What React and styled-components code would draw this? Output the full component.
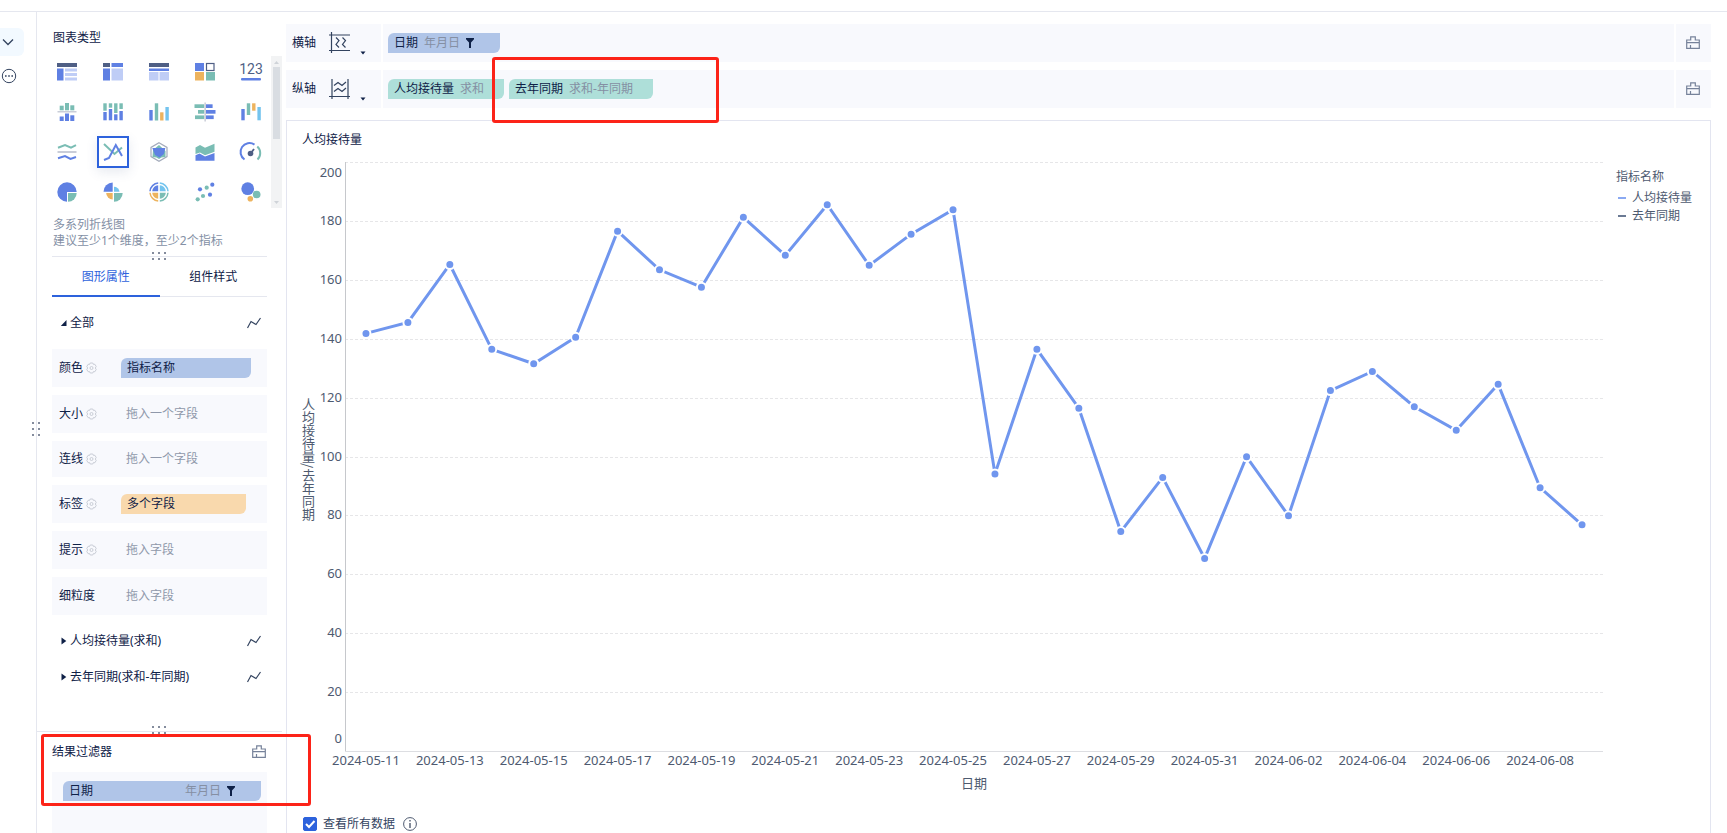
import React, { useLayoutEffect, useRef, useState } from 'react'
import styled, { createGlobalStyle, css } from 'styled-components'

const GlobalStyle = createGlobalStyle`
  * {
    box-sizing: border-box;
  }
  body {
    margin: 0;
    background: #fff;
    color: #0f2147;
    font-family: "Noto Sans", "Noto Sans CJK SC", sans-serif;
    font-size: 12px;
    line-height: 16px;
  }
  button {
    display: flex;
    align-items: center;
    margin: 0;
    padding: 0;
    border: none;
    background: transparent;
    color: inherit;
    font: inherit;
    cursor: pointer;
  }
  svg {
    display: block;
    flex-shrink: 0;
  }
`

const BLUE = '#5f80e3'
const LIGHT = '#bfcdf6'
const DARK = '#4f5f85'
const GREEN = '#7abdb4'
const ORANGE = '#edb35e'
const CYAN = '#74c4ee'
const GREY = '#c9cdd8'

/* ---------- page ---------- */

const Page = styled.div`
  display: flex;
  flex-direction: column;
  min-height: 100vh;
`

const TopBar = styled.header`
  height: 12px;
  border-bottom: 1px solid #e5e7ef;
`

const Body = styled.div`
  display: flex;
  flex: 1;
`

const Rail = styled.nav`
  display: flex;
  flex-direction: column;
  width: 36px;
  padding-top: 16px;
  gap: 6px;
`

const RailButton = styled.button`
  width: 24px;
  height: 28px;
  border-radius: 0 6px 6px 0;
  background: ${p => (p.$active ? '#f2f9ff' : 'transparent')};
  color: #33435f;
`

const Panel = styled.aside`
  position: relative;
  display: flex;
  flex-direction: column;
  width: 250px;
  border-left: 1px solid #e5e7ef;
`

const SideHandle = styled.div`
  position: absolute;
  left: -6px;
  top: 409px;
`

/* ---------- chart type picker ---------- */

const PanelTitle = styled.h2`
  margin: 0;
  padding: 18px 15px 10px 16px;
  font-size: 12px;
  font-weight: 400;
`

const Picker = styled.div`
  display: flex;
  gap: 4px;
  padding-left: 14px;
`

const TypeGrid = styled.div`
  display: grid;
  grid-template-columns: repeat(5, 32px);
  gap: 8px 14px;
`

const TypeButton = styled.button`
  justify-content: center;
  width: 32px;
  height: 32px;
  ${p => p.$selected && css`
    border: 2px solid #2d62dc;
    box-shadow: 0 4px 12px rgba(60, 80, 130, 0.12);
  `}
`

const ScrollTrack = styled.div`
  display: flex;
  flex-direction: column;
  align-items: center;
  width: 11px;
  background: #f2f3f4;
`

const ScrollThumb = styled.div`
  width: 7px;
  height: 72px;
  margin-bottom: auto;
  background: #d9dde2;
`

const Hint = styled.p`
  margin: 0;
  padding: 9px 0 7px 16px;
  color: #8490a5;
`

const Divider = styled.div`
  position: relative;
  height: 1px;
  margin: ${p => (p.$wide ? '0 4px 0 0' : '0 19px 0 15px')};
  background: #e5e7ef;
`

const DividerHandle = styled.div`
  position: absolute;
  left: ${p => (p.$wide ? '114px' : '99px')};
  top: ${p => (p.$wide ? '-6px' : '-5px')};
`

const Tabs = styled.div`
  display: flex;
  height: 40px;
  margin: 0 19px 0 15px;
  box-shadow: inset 0 -1px #e5e7ef;
`

const Tab = styled.button`
  flex: 1;
  justify-content: center;
  padding-top: 2px;
  border-bottom: 2px solid ${p => (p.$active ? '#2d62dc' : 'transparent')};
  color: ${p => (p.$active ? '#2d62dc' : '#0f2147')};
`

/* ---------- attributes ---------- */

const Attributes = styled.div`
  display: flex;
  flex-direction: column;
  padding: 8px 19px 36px 15px;
`

const GroupButton = styled.button`
  gap: 3px;
  height: 36px;
  padding: 0 6px 0 8px;

  svg:last-child {
    margin-left: auto;
  }
`

const AttrList = styled.div`
  display: flex;
  flex-direction: column;
  gap: 8px;
  padding: 8px 0;
`

const AttrRow = styled.div`
  display: flex;
  align-items: center;
  height: ${p => (p.$short ? '36px' : '38px')};
  padding-left: 7px;
  background: #f8f9fd;
`

const AttrLabel = styled.div`
  display: flex;
  align-items: center;
  gap: 3px;
  width: 62px;
`

const Placeholder = styled.span`
  padding-left: 5px;
  color: #8f98aa;
`

const pillColors = {
  blue: '#b0c5e8',
  teal: '#aedfd9',
  orange: '#f9d9ad',
}

const Pill = styled.div`
  display: flex;
  align-items: center;
  gap: 6px;
  width: ${p => p.$width || 'auto'};
  height: 20px;
  padding: 0 20px 0 6px;
  border-radius: 6px 0 6px 0;
  background: ${p => pillColors[p.$color]};
`

const PillNote = styled.span`
  color: #858fa3;
  ${p => p.$right && 'margin-left: auto;'}
`

/* ---------- result filter ---------- */

const FilterSection = styled.section`
  position: relative;
  display: flex;
  flex: 1;
  flex-direction: column;
  padding: 0 19px 0 15px;
`

const FilterHead = styled.div`
  display: flex;
  align-items: center;
  justify-content: space-between;
  height: 40px;
  padding-right: 1px;
`

const FilterBox = styled.div`
  flex: 1;
  min-height: 60px;
  padding: 9px 6px 9px 11px;
  background: #f8f9fd;
`

const FilterMark = styled.div`
  position: absolute;
  left: 4px;
  top: 2px;
  width: 270px;
  height: 72px;
  border: 3px solid #fc2318;
  border-radius: 3px;
  z-index: 2;
  pointer-events: none;
`

/* ---------- right side ---------- */

const Main = styled.main`
  display: flex;
  flex: 1;
  flex-direction: column;
  gap: 12px;
  min-width: 0;
  padding: 12px 16px 0 0;
`

const AxisList = styled.div`
  position: relative;
  display: flex;
  flex-direction: column;
  gap: 8px;
`

const AxisRow = styled.div`
  display: grid;
  grid-template-columns: 95px 1fr 35px;
  gap: 2px;
  height: 38px;
`

const AxisCell = styled.div`
  display: flex;
  align-items: center;
  gap: 5px;
  padding-left: ${p => (p.$head ? '6px' : '5px')};
  background: #f8f9fd;
`

const AxisButton = styled.button`
  gap: 9px;
  margin-left: 8px;
`

const ClearButton = styled.button`
  justify-content: center;
  padding-right: 2px;
  background: #f8f9fd;
`

const AxisMark = styled.div`
  position: absolute;
  left: 206px;
  top: 33px;
  width: 227px;
  height: 66px;
  border: 3px solid #fc2318;
  border-radius: 3px;
  pointer-events: none;
`

const Card = styled.section`
  display: flex;
  flex: 1;
  flex-direction: column;
  border: 1px solid #e3e5f0;
  border-bottom: none;
  padding-left: 15px;
`

const CardTitle = styled.h3`
  margin: 0;
  padding: 11px 0 6px;
  font-size: 12px;
  font-weight: 400;
`

const ChartArea = styled.div`
  display: flex;
`

const YTitle = styled.div`
  align-self: center;
  width: 13px;
  margin: 0 2px 30px 0;
  color: #4e5a70;
  font-family: "Noto Sans CJK SC", sans-serif;
  font-size: 13px;
  line-height: 13px;
  writing-mode: vertical-rl;
`

const Plot = styled.div`
  flex: 1;
  min-width: 0;
  height: 640px;

  text {
    fill: #4e5a70;
    font-size: 13px;
  }
`

const Legend = styled.div`
  width: 107px;
  padding: 15px 0 0 13px;
  color: #4e5a70;
`

const LegendList = styled.ul`
  margin: 4px 0 0;
  padding: 0;
  list-style: none;
`

const LegendItem = styled.li`
  display: flex;
  align-items: center;
  gap: 6px;
  height: 18px;
  padding-left: 2px;

  &::before {
    content: '';
    width: 8px;
    height: 2px;
    background: ${p => p.$color};
  }
`

const Footer = styled.div`
  display: flex;
  align-items: center;
  gap: 8px;
  height: 16px;
  margin: 22px 0 0 1px;
  color: #33435f;
`

const CheckLabel = styled.label`
  display: flex;
  align-items: center;
  gap: 6px;
`

const CheckWrap = styled.span`
  display: grid;

  > * {
    grid-area: 1 / 1;
  }
  svg {
    pointer-events: none;
  }
`

const Check = styled.input`
  appearance: none;
  width: 14px;
  height: 14px;
  margin: 0;
  border: 1px solid #2d62dc;
  border-radius: 2px;
  background: #fff;

  &:checked {
    background: #2d62dc;
  }
`

/* ---------- icons ---------- */

const bars = list => list.map(([x, y, w, h, fill], i) => (
  <rect key={i} x={x} y={y} width={w} height={h} fill={fill} />
))

const line = (points, color) => (
  <polyline points={points} fill="none" stroke={color} strokeWidth="2" />
)

const chartTypes = [
  { name: '分组表', art: bars([[0, 1, 20, 4, DARK], [0, 6.5, 6.5, 12, BLUE], [8, 6.5, 12, 3, LIGHT], [8, 11, 12, 3, LIGHT], [8, 15.5, 12, 3, LIGHT]]) },
  { name: '交叉表', art: bars([[0, 1, 7, 4, DARK], [8.5, 1, 11.5, 4, BLUE], [0, 6.5, 7, 12, BLUE], [8.5, 6.5, 11.5, 12, LIGHT]]) },
  { name: '明细表', art: bars([[0, 1, 20, 4, DARK], [0, 6.5, 20, 2.5, BLUE], [0, 10, 9.5, 8.5, LIGHT], [10.5, 10, 9.5, 8.5, LIGHT]]) },
  {
    name: '颜色表格',
    art: (
      <>
        {bars([[0, 1, 9, 8, BLUE], [0, 10, 9, 8.5, ORANGE], [11, 10, 9, 8.5, GREEN]])}
        <rect x="11.5" y="1.5" width="7.5" height="7" fill="#fff" stroke={DARK} strokeWidth="1.2" />
      </>
    ),
  },
  {
    name: 'KPI指标卡',
    art: (
      <>
        <text x="10" y="12" textAnchor="middle" fontFamily="Roboto, sans-serif" fontSize="14" fill={DARK}>123</text>
        <rect x="0" y="16" width="20" height="2.4" rx="1" fill={BLUE} />
      </>
    ),
  },
  { name: '对比柱状图', art: bars([[2.7, 3.7, 4, 4.6, GREEN], [8, 1, 4, 7.3, GREEN], [13.3, 3.3, 4, 5, GREEN], [0.5, 9, 19, 1.5, GREY], [2.7, 14.5, 4, 4.5, BLUE], [8, 11.5, 4, 7.5, BLUE], [13.3, 13.3, 4, 5.7, BLUE]]) },
  { name: '堆积柱状图', art: bars([[0.3, 1.3, 3.4, 7.4, GREEN], [5.8, 1.3, 3.4, 4.4, GREEN], [11.1, 1.3, 3.4, 9.7, GREEN], [16.4, 1.3, 3.4, 5.7, GREEN], [0.3, 10, 3.4, 8.3, BLUE], [5.8, 7, 3.4, 11.3, BLUE], [11.1, 12.3, 3.4, 6, BLUE], [16.4, 9, 3.4, 9.3, BLUE]]) },
  { name: '柱状图', art: bars([[0.3, 8, 3.4, 10.5, BLUE], [5.8, 1.3, 3.4, 17.2, GREEN], [11.1, 10.3, 3.4, 8.2, ORANGE], [16.4, 5, 3.4, 13.5, CYAN]]) },
  { name: '对比条形图', art: bars([[-0.5, 2.3, 9.8, 3.7, GREEN], [3, 8, 6.3, 3.7, GREEN], [0, 13.4, 9.3, 3.7, GREEN], [9.4, 0.5, 1.5, 19, GREY], [11, 2.3, 6.6, 3.7, BLUE], [11, 8, 9.5, 3.7, BLUE], [11, 13.4, 7.7, 3.7, BLUE]]) },
  { name: '瀑布图', art: bars([[0.3, 7, 3.4, 11.3, BLUE], [5.8, 1.3, 3.4, 11.7, GREEN], [11.1, 1.3, 3.4, 7.4, ORANGE], [16.4, 5, 3.4, 13.3, CYAN]]) },
  {
    name: '折线图',
    art: (
      <>
        {line('1,5.7 8,3 14,5.7 19,3.2', GREEN)}
        {line('0.5,10 19.5,10', GREY)}
        {line('1,16.3 8,14 13.5,17 19,15', BLUE)}
      </>
    ),
  },
  {
    name: '多系列折线图',
    selected: true,
    art: (
      <>
        {line('1,2 11.5,12 19,5.5', GREEN)}
        {line('1,18 6,16 12.8,3 19,14', BLUE)}
      </>
    ),
  },
  {
    name: '雷达图',
    art: (
      <>
        <path d="M10 .8l8 4.6v9.2l-8 4.6-8-4.6V5.4z" fill="none" stroke="#a3abbb" strokeWidth="1.2" />
        <path d="M10 3l6.5 6v6l-4 .5L10 17l-2.5-1.5L3.5 15 4 8z" fill={GREEN} />
        <path d="M3.3 6h13L15 12l-4.500 3.500L6 13z" fill={BLUE} />
      </>
    ),
  },
  {
    name: '面积图',
    art: (
      <>
        <path d="M.5 5.5L5 3l5 2.800 9.500-4v8L10 13.300 5 10.500.5 12z" fill={GREEN} />
        <path d="M.5 13.200l4-1.600 5.500 3 9.500-3.500v7.600H.5z" fill={BLUE} />
      </>
    ),
  },
  {
    name: '仪表盘',
    art: (
      <>
        <path d="M3.500 17.500A8.800 8.800 0 0 1 13.500 2.600" fill="none" stroke={BLUE} strokeWidth="2" />
        <path d="M16.300 4.600a8.800 8.800 0 0 1 .2 12.900" fill="none" stroke={GREEN} strokeWidth="2" />
        <circle cx="9.5" cy="11.5" r="2.8" fill={DARK} />
        <path d="M10 11l3-4" stroke={DARK} strokeWidth="1.8" />
      </>
    ),
  },
  {
    name: '饼图',
    art: (
      <>
        <path d="M10 10h9.700A9.700 9.700 0 1 0 10 19.700z" fill={BLUE} />
        <path d="M11 11h8.700a8.700 8.700 0 0 1-8.700 8.700z" fill={GREEN} />
      </>
    ),
  },
  {
    name: '玫瑰图',
    art: (
      <>
        <path d="M9.700 9.700V.5A9.200 9.200 0 0 0 .5 9.700z" fill={BLUE} />
        <path d="M11 9.700V4.700a5.500 5.500 0 0 1 5.500 5z" fill={CYAN} />
        <path d="M9.700 11v6.500A6.500 6.500 0 0 1 3.200 11z" fill={ORANGE} />
        <path d="M11 11v8.700A8.700 8.700 0 0 0 19.700 11z" fill={GREEN} />
      </>
    ),
  },
  {
    name: '多层饼图',
    art: (
      <>
        <path d="M9.200 9.200v-6a6.500 6.500 0 0 0-6 6z" fill={BLUE} />
        <path d="M10.800 9.200v-6a6.500 6.500 0 0 1 6 6z" fill={CYAN} />
        <path d="M9.200 10.800v6a6.500 6.500 0 0 1-6-6z" fill={ORANGE} />
        <path d="M10.800 10.800v6a6.500 6.500 0 0 0 6-6z" fill={GREEN} />
        <g fill="none" strokeWidth="1.5">
          <path d="M9.200 1A9 9 0 0 0 1 9.200" stroke={BLUE} />
          <path d="M10.800 1A9 9 0 0 1 19 9.200" stroke={CYAN} />
          <path d="M9.200 19A9 9 0 0 1 1 10.800" stroke={ORANGE} />
          <path d="M10.800 19A9 9 0 0 0 19 10.800" stroke={GREEN} />
        </g>
      </>
    ),
  },
  {
    name: '散点图',
    art: [[5, 7.3, BLUE], [11.7, 5.7, GREEN], [17.3, 2.7, BLUE], [2.7, 17.3, GREEN], [8, 14, GREEN], [15, 12.7, BLUE]].map(([x, y, fill]) => (
      <circle key={x} cx={x} cy={y} r="2.1" fill={fill} />
    )),
  },
  {
    name: '聚合气泡图',
    art: (
      <>
        <circle cx="6.7" cy="6.7" r="6.4" fill={BLUE} />
        <circle cx="15.7" cy="12.5" r="3.8" fill={GREEN} />
        <circle cx="9.3" cy="16.8" r="2.8" fill={ORANGE} />
      </>
    ),
  },
]

const BrushIcon = () => (
  <svg width="14" height="14" viewBox="0 0 14 14" fill="none" stroke="#76829a" strokeWidth="1.2">
    <path d="M.7 12.400V4h4V.900h4.600V4h4v8.400zM.7 6.600h12.600M4.500 9v3.400" />
  </svg>
)

const FunnelIcon = () => (
  <svg width="14" height="12" viewBox="0 0 14 12">
    <path d="M0 1h8v1.200L5 5.500V11H3V5.500L0 2.200z" fill="#0f2147" />
  </svg>
)

const GearIcon = () => (
  <svg width="11" height="12" viewBox="0 0 11 12" fill="none" stroke="#c9cdd6">
    <path d="M4.200 1h2.600l.6 1.400 1.500-.1 1.300 2.200-.9 1.500.9 1.500-1.300 2.200-1.500-.1-.6 1.400H4.200l-.6-1.400-1.500.1L.8 7.500 1.700 6 .8 4.500l1.300-2.200 1.500.1z" />
    <circle cx="5.5" cy="6" r="1.5" />
  </svg>
)

const TrendIcon = () => (
  <svg width="14" height="12" viewBox="0 0 14 12" fill="none" stroke="#33435f" strokeWidth="1.2">
    <path d="M.5 11l3.500-6.500 5 3L13.500 1" />
  </svg>
)

const TriangleIcon = ({ open }) => (
  <svg width="7" height="8" viewBox="0 0 7 8" fill="#0f2147">
    <path d={open ? 'M6.500 1v6H.8z' : 'M1.500.5v7L6.300 4z'} />
  </svg>
)

const CaretIcon = () => (
  <svg width="6" height="24" viewBox="0 0 6 24">
    <path d="M.5 20.500h5L3 23.500z" fill="#0f2147" />
  </svg>
)

const XAxisIcon = () => (
  <svg width="22" height="22" viewBox="0 0 22 22" fill="none" stroke="#33435f" strokeWidth="1.2">
    <path d="M2.500 0v21M0 3h21M0 18.500h21M7 5.500l3 3-3 4 3 3M13.500 5.500l3 3-3 4 3 3" />
  </svg>
)

const YAxisIcon = () => (
  <svg width="22" height="22" viewBox="0 0 22 22" fill="none" stroke="#33435f" strokeWidth="1.2">
    <path d="M3 1v20M19 1v20M0 18.500h21M5 7.500l4-3 4 3 4-3.500M5 13.500l4-3 4 3 4-3.500" />
  </svg>
)

const Dots = ({ cols, rows, label }) => (
  <svg width={cols * 6} height={rows * 6} viewBox={`0 0 ${cols * 6} ${rows * 6}`} aria-label={label}>
    {Array.from({ length: cols * rows }, (_, i) => (
      <rect key={i} x={(i % cols) * 6 + 1} y={Math.floor(i / cols) * 6 + 1} width="2" height="2" rx="1" fill="#5b667c" />
    ))}
  </svg>
)

/* ---------- chart ---------- */

const values = [
  141.8, 145.5, 165.2, 136.4, 131.5, 140.5, 176.5, 163.4, 157.5, 181.2,
  168.3, 185.5, 164.9, 175.5, 183.8, 94.1, 136.4, 116.4, 74.5, 92.9,
  65.4, 99.9, 79.9, 122.4, 128.9, 116.9, 108.9, 124.5, 89.4, 76.8,
]

const dayLabel = i => {
  const d = new Date(Date.UTC(2024, 4, 11 + i))
  return d.toISOString().slice(0, 10)
}

const TOP = 8
const BOTTOM = 597
const LEFT = 28
const ticks = [0, 20, 40, 60, 80, 100, 120, 140, 160, 180, 200]

const yOf = v => BOTTOM - (v / 200) * (BOTTOM - TOP)

// the first and last tick labels are kept inside the plot
const tickY = v => {
  if (v === 0) return BOTTOM - 8
  if (v === 200) return TOP + 15
  return yOf(v) + 4
}

const LineChart = () => {
  const ref = useRef(null)
  const [width, setWidth] = useState(1286)

  useLayoutEffect(() => {
    const measure = () => setWidth(ref.current.clientWidth)
    measure()
    window.addEventListener('resize', measure)
    return () => window.removeEventListener('resize', measure)
  }, [])

  const step = (width - LEFT) / values.length
  const xOf = i => LEFT + step * (i + 0.5)

  return (
    <Plot ref={ref}>
      <svg width={width} height="640" role="img" aria-label="人均接待量">
        {ticks.map(t => (
          <g key={t}>
            {t > 0 && (
              <line x1={LEFT} x2={width} y1={Math.round(yOf(t)) + 0.5} y2={Math.round(yOf(t)) + 0.5} stroke="#e6e6e8" strokeDasharray="3 2" />
            )}
            <text x={LEFT - 3} y={tickY(t)} textAnchor="end">{t}</text>
          </g>
        ))}
        <path d={`M${LEFT + 0.5} ${TOP}V${BOTTOM + 0.5}`} stroke="#c6c8cc" />
        <path d={`M${LEFT} ${BOTTOM + 0.5}H${width}`} stroke="#dddee2" />
        <polyline points={values.map((v, i) => `${xOf(i)},${yOf(v)}`).join(' ')} fill="none" stroke="#7096ee" strokeWidth="3" />
        {values.map((v, i) => (
          <circle key={i} cx={xOf(i)} cy={yOf(v)} r="4.5" fill="#7096ee" stroke="#fff" strokeWidth="2" />
        ))}
        {values.map((v, i) => i % 2 === 0 && (
          <text key={i} x={xOf(i)} y="611" textAnchor="middle">{dayLabel(i)}</text>
        ))}
        <text x={(LEFT + width) / 2} y="634" textAnchor="middle">日期</text>
      </svg>
    </Plot>
  )
}

/* ---------- app ---------- */

const attributes = [
  { label: '颜色', gear: true, pill: '指标名称', color: 'blue', width: '130px' },
  { label: '大小', gear: true, empty: '拖入一个字段' },
  { label: '连线', gear: true, empty: '拖入一个字段', short: true },
  { label: '标签', gear: true, pill: '多个字段', color: 'orange', width: '125px' },
  { label: '提示', gear: true, empty: '拖入字段' },
  { label: '细粒度', empty: '拖入字段' },
]

const App = () => {
  const [tab, setTab] = useState('图形属性')

  return (
    <Page>
      <GlobalStyle />
      <TopBar />
      <Body>
        <Rail>
          <RailButton $active aria-label="展开">
            <svg width="16" height="14" viewBox="0 0 16 14" fill="none" stroke="#33435f" strokeWidth="1.3">
              <path d="M3 4.500l5 5 5-5" />
            </svg>
          </RailButton>
          <RailButton aria-label="更多">
            <svg width="18" height="16" viewBox="0 0 18 16">
              <circle cx="9" cy="8" r="6.7" fill="none" stroke="#33435f" />
              <path d="M5 7.200h1.600v1.600H5zM8.200 7.200h1.600v1.600H8.200zM11.400 7.200H13v1.600h-1.600z" fill="#33435f" />
            </svg>
          </RailButton>
        </Rail>

        <Panel>
          <SideHandle><Dots cols={2} rows={3} label="调整宽度" /></SideHandle>
          <PanelTitle>图表类型</PanelTitle>
          <Picker>
            <TypeGrid>
              {chartTypes.map(t => (
                <TypeButton key={t.name} $selected={t.selected} aria-label={t.name}>
                  <svg width="20" height="20" viewBox="0 0 20 20" overflow="visible">{t.art}</svg>
                </TypeButton>
              ))}
            </TypeGrid>
            <ScrollTrack>
              <svg width="11" height="11" viewBox="0 0 11 11"><path d="M3 8l2.500-3L8 8z" fill="#cfd3d8" /></svg>
              <ScrollThumb />
              <svg width="11" height="11" viewBox="0 0 11 11"><path d="M3 4l2.500 3L8 4z" fill="#cfd3d8" /></svg>
            </ScrollTrack>
          </Picker>
          <Hint>多系列折线图<br />建议至少1个维度，至少2个指标</Hint>
          <Divider>
            <DividerHandle><Dots cols={3} rows={2} label="调整高度" /></DividerHandle>
          </Divider>

          <Tabs role="tablist">
            {['图形属性', '组件样式'].map(name => (
              <Tab key={name} role="tab" aria-selected={tab === name} $active={tab === name} onClick={() => setTab(name)}>
                {name}
              </Tab>
            ))}
          </Tabs>

          <Attributes>
            <GroupButton aria-expanded="true"><TriangleIcon open />全部<TrendIcon /></GroupButton>
            <AttrList>
              {attributes.map(a => (
                <AttrRow key={a.label} $short={a.short}>
                  <AttrLabel>{a.label}{a.gear && <GearIcon />}</AttrLabel>
                  {a.pill
                    ? <Pill $color={a.color} $width={a.width}>{a.pill}</Pill>
                    : <Placeholder>{a.empty}</Placeholder>}
                </AttrRow>
              ))}
            </AttrList>
            <GroupButton aria-expanded="false"><TriangleIcon />人均接待量(求和)<TrendIcon /></GroupButton>
            <GroupButton aria-expanded="false"><TriangleIcon />去年同期(求和-年同期)<TrendIcon /></GroupButton>
          </Attributes>

          <Divider $wide>
            <DividerHandle $wide><Dots cols={3} rows={2} label="调整高度" /></DividerHandle>
          </Divider>
          <FilterSection>
            <FilterHead>
              结果过滤器
              <button aria-label="清空过滤器"><BrushIcon /></button>
            </FilterHead>
            <FilterBox>
              <Pill $color="blue">日期<PillNote $right>年月日</PillNote><FunnelIcon /></Pill>
            </FilterBox>
            <FilterMark />
          </FilterSection>
        </Panel>

        <Main>
          <AxisList>
            <AxisRow>
              <AxisCell $head>
                横轴
                <AxisButton aria-label="横轴设置"><XAxisIcon /><CaretIcon /></AxisButton>
              </AxisCell>
              <AxisCell>
                <Pill $color="blue">日期<PillNote>年月日</PillNote><FunnelIcon /></Pill>
              </AxisCell>
              <ClearButton aria-label="清空横轴"><BrushIcon /></ClearButton>
            </AxisRow>
            <AxisRow>
              <AxisCell $head>
                纵轴
                <AxisButton aria-label="纵轴设置"><YAxisIcon /><CaretIcon /></AxisButton>
              </AxisCell>
              <AxisCell>
                <Pill $color="teal">人均接待量<PillNote>求和</PillNote></Pill>
                <Pill $color="teal">去年同期<PillNote>求和-年同期</PillNote></Pill>
              </AxisCell>
              <ClearButton aria-label="清空纵轴"><BrushIcon /></ClearButton>
            </AxisRow>
            <AxisMark />
          </AxisList>

          <Card>
            <CardTitle>人均接待量</CardTitle>
            <ChartArea>
              <YTitle>人均接待量/去年同期</YTitle>
              <LineChart />
              <Legend>
                指标名称
                <LegendList>
                  <LegendItem $color="#8aa9f2">人均接待量</LegendItem>
                  <LegendItem $color="#6b7a94">去年同期</LegendItem>
                </LegendList>
              </Legend>
            </ChartArea>
            <Footer>
              <CheckLabel>
                <CheckWrap>
                  <Check type="checkbox" defaultChecked />
                  <svg width="14" height="14" viewBox="0 0 14 14" fill="none" stroke="#fff" strokeWidth="2">
                    <path d="M3 7l3 3 5.500-6" />
                  </svg>
                </CheckWrap>
                查看所有数据
              </CheckLabel>
              <svg width="14" height="14" viewBox="0 0 14 14" fill="none" stroke="#4e5a70">
                <circle cx="7" cy="7" r="6.4" />
                <path d="M7 6v5M7 3v1.500" strokeWidth="1.4" />
              </svg>
            </Footer>
          </Card>
        </Main>
      </Body>
    </Page>
  )
}

export default App
